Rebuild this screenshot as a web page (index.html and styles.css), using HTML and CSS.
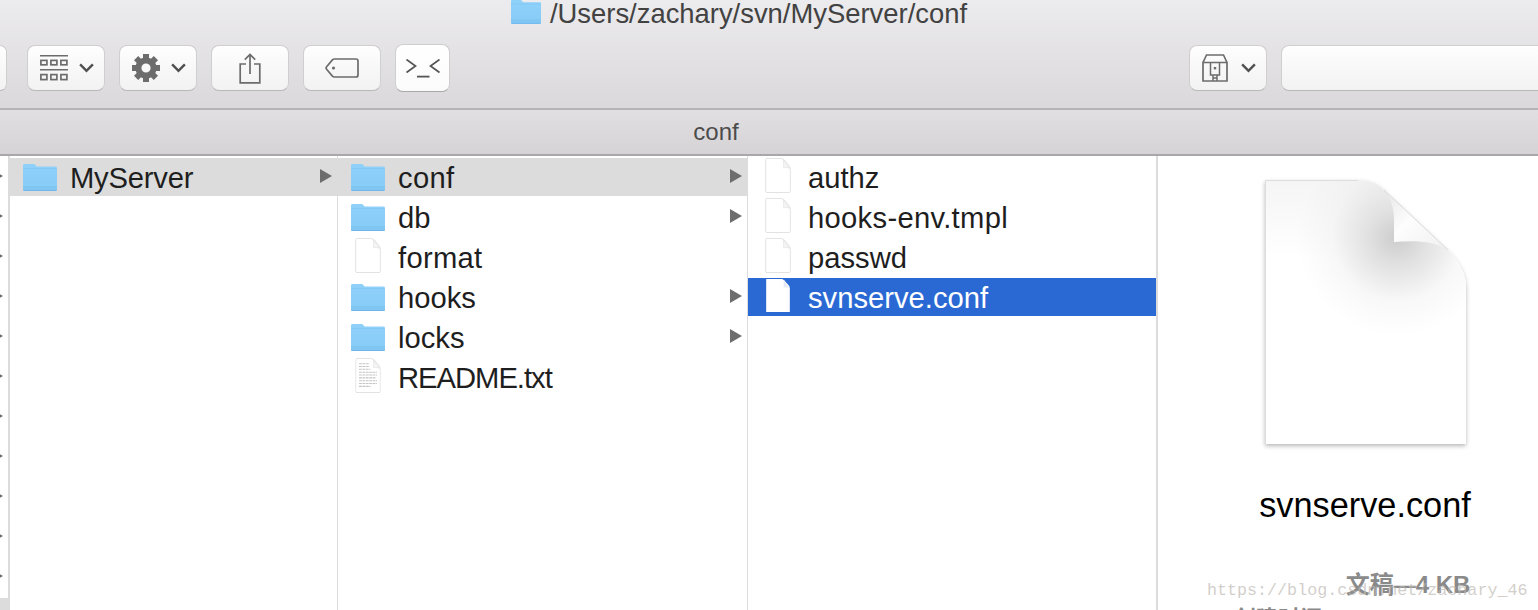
FILE: index.html
```html
<!DOCTYPE html>
<html lang="en">
<head>
<meta charset="utf-8">
<title>conf</title>
<link rel="stylesheet" href="styles.css">
</head>
<body>
<svg class="defs" width="0" height="0" aria-hidden="true">
  <defs>
    <linearGradient id="fg" x1="0" y1="0" x2="0" y2="1">
      <stop offset="0" stop-color="#8fd1f9"/><stop offset=".8" stop-color="#88ccf8"/><stop offset=".82" stop-color="#81c5f3"/><stop offset="1" stop-color="#81c5f3"/>
    </linearGradient>
    <radialGradient id="curl" gradientUnits="userSpaceOnUse" cx="132" cy="56" r="100">
      <stop offset="0" stop-color="#c9c9c9"/><stop offset=".28" stop-color="#e0e0e0"/><stop offset=".65" stop-color="#f8f8f8"/><stop offset="1" stop-color="#ffffff"/>
    </radialGradient>
    <linearGradient id="topshade" x1="0" y1="0" x2="0" y2="1">
      <stop offset="0" stop-color="#e6e6e6"/><stop offset="1" stop-color="#e6e6e6" stop-opacity="0"/>
    </linearGradient>
    <linearGradient id="flap" x1="0" y1="0" x2="1" y2="1">
      <stop offset="0" stop-color="#e6e6e6"/><stop offset=".45" stop-color="#fdfdfd"/><stop offset="1" stop-color="#f0f0f0"/>
    </linearGradient>
    <symbol id="folder" viewBox="0 0 34 27">
      <path d="M1.5 0H10.5C12 0 12.5 1 13.5 2.5H32.5C33.4 2.5 34 3.1 34 4V25.5C34 26.4 33.4 27 32.5 27H1.5C.6 27 0 26.4 0 25.5V1.5C0 .6.6 0 1.5 0Z" fill="url(#fg)"/>
      <path d="M0 4.5H34" stroke="#74bdef" stroke-width="1" opacity=".4"/>
      <path d="M.5 26.5H33.5" stroke="#70b8ec" stroke-width="1"/>
    </symbol>
    <symbol id="doc" viewBox="0 0 27 37">
      <path d="M.5 1.5C.5 1 1 .5 1.5 .5H16.5C18 .5 19 1 20 2L25 8C26 9.2 26.5 10.5 26.5 12V35.5C26.5 36 26 36.5 25.5 36.5H1.5C1 36.5 .5 36 .5 35.5Z" fill="#fff" stroke="#e0e0e0"/>
      <path d="M19 1.5C19.6 4 19.8 7 19.4 10C22 9.6 24 10 26 11Z" fill="#f6f6f6" stroke="#e2e2e2" stroke-width=".8"/>
    </symbol>
    <symbol id="docsel" viewBox="0 0 27 37">
      <path d="M1 1.5C1 1 1.5 1 2 1H16.5C18 1 19 1.5 20 2.5L25 8C25.6 9 26 10 26 12V35.5C26 36 25.5 36 25 36H2C1.5 36 1 36 1 35.5Z" fill="#fff"/>
      <path d="M19 2C19.6 4 19.8 7 19.4 10C22 9.6 24 10 25.8 11Z" fill="#e3e9f6"/>
    </symbol>
    <symbol id="arrow" viewBox="0 0 12 14">
      <path d="M0 0L12 7L0 14Z" fill="#6d6d6d"/>
    </symbol>
    <symbol id="chev" viewBox="0 0 16 10">
      <path d="M1.2 1.2L8 8L14.8 1.2" fill="none" stroke="#4f4f4f" stroke-width="2.6"/>
    </symbol>
  </defs>
</svg>

<div class="window">
  <header class="toolbar">
    <div class="title">
      <svg class="title-folder"><use href="#folder"/></svg>
      <span>/Users/zachary/svn/MyServer/conf</span>
    </div>
    <div class="tools">
      <div class="btn btn-stub"></div>
      <div class="btn btn-view">
        <svg class="ico-view" viewBox="0 0 28 26">
          <path d="M0 .8H28M0 14.8H28" stroke="#6c6c6c" stroke-width="1.6"/>
          <g fill="none" stroke="#6c6c6c" stroke-width="1.7">
            <rect x=".9" y="5.4" width="6" height="4.4"/><rect x="10.9" y="5.4" width="6" height="4.4"/><rect x="20.9" y="5.4" width="6" height="4.4"/>
            <rect x=".9" y="19.6" width="6" height="5"/><rect x="10.9" y="19.6" width="6" height="5"/><rect x="20.9" y="19.6" width="6" height="5"/>
          </g>
        </svg>
        <svg class="chev"><use href="#chev"/></svg>
      </div>
      <div class="btn btn-view">
        <svg class="ico-gear" viewBox="-14 -14 28 28">
          <circle r="7.6" fill="none" stroke="#6c6c6c" stroke-width="6"/>
          <g fill="#6c6c6c">
            <rect x="-3" y="-14" width="6" height="6"/>
            <rect x="-3" y="-14" width="6" height="6" transform="rotate(45)"/>
            <rect x="-3" y="-14" width="6" height="6" transform="rotate(90)"/>
            <rect x="-3" y="-14" width="6" height="6" transform="rotate(135)"/>
            <rect x="-3" y="-14" width="6" height="6" transform="rotate(180)"/>
            <rect x="-3" y="-14" width="6" height="6" transform="rotate(225)"/>
            <rect x="-3" y="-14" width="6" height="6" transform="rotate(270)"/>
            <rect x="-3" y="-14" width="6" height="6" transform="rotate(315)"/>
          </g>
        </svg>
        <svg class="chev"><use href="#chev"/></svg>
      </div>
      <div class="btn">
        <svg class="ico-share" viewBox="0 0 22 31">
          <path d="M7 11H1.2V29.8H20.8V11H15" fill="none" stroke="#6c6c6c" stroke-width="1.7"/>
          <path d="M11 21V1.5M5.8 6.6L11 1.4L16.2 6.6" fill="none" stroke="#6c6c6c" stroke-width="1.7"/>
        </svg>
      </div>
      <div class="btn">
        <svg class="ico-tag" viewBox="0 0 34 20">
          <path d="M9.5 1H31C32.2 1 33 1.8 33 3V17C33 18.2 32.2 19 31 19H9.5C8.6 19 8 18.7 7.4 18.1L1.6 11.2C1 10.5 1 9.5 1.6 8.8L7.4 1.9C8 1.3 8.6 1 9.5 1Z" fill="none" stroke="#6c6c6c" stroke-width="1.7"/>
          <circle cx="8.5" cy="10" r="1.6" fill="#6c6c6c"/>
        </svg>
      </div>
      <div class="btn btn-term">
        <svg class="ico-term" viewBox="0 0 34 19">
          <path d="M.5 .5L9.5 7L.5 13.5M33.5 .5L24.5 7L33.5 13.5" fill="none" stroke="#555" stroke-width="1.7"/>
          <path d="M11 17.6H23.5" stroke="#555" stroke-width="1.8"/>
        </svg>
      </div>
      <div class="tools-gap"></div>
      <div class="btn btn-view">
        <svg class="ico-box" viewBox="0 0 26 28">
          <path d="M1 8.5H25V27H1ZM1 8.5L4.5 1H21.5L25 8.5" fill="none" stroke="#6c6c6c" stroke-width="1.7"/>
          <path d="M8.5 9V21H17.5V9M11 21V27M15 21V27M11 24H15" fill="none" stroke="#6c6c6c" stroke-width="1.5"/>
          <rect x="11.8" y="13" width="2.4" height="2.4" fill="#6c6c6c"/>
        </svg>
        <svg class="chev"><use href="#chev"/></svg>
      </div>
      <div class="btn btn-search"></div>
    </div>
  </header>

  <div class="tabbar">conf</div>

  <main class="columns">
    <section class="col col-stub">
      <div class="row"><svg class="arrow"><use href="#arrow"/></svg></div>
      <div class="row"><svg class="arrow"><use href="#arrow"/></svg></div>
      <div class="row"><svg class="arrow"><use href="#arrow"/></svg></div>
      <div class="row"><svg class="arrow"><use href="#arrow"/></svg></div>
      <div class="row"><svg class="arrow"><use href="#arrow"/></svg></div>
      <div class="row"><svg class="arrow"><use href="#arrow"/></svg></div>
      <div class="row"><svg class="arrow"><use href="#arrow"/></svg></div>
      <div class="row"><svg class="arrow"><use href="#arrow"/></svg></div>
      <div class="row"><svg class="arrow"><use href="#arrow"/></svg></div>
      <div class="row"><svg class="arrow"><use href="#arrow"/></svg></div>
      <div class="row"><svg class="arrow"><use href="#arrow"/></svg></div>
      <div class="row is-open"></div>
    </section>

    <section class="col col-1">
      <div class="row is-open">
        <span class="slot"><svg class="folder"><use href="#folder"/></svg></span>
        <span class="name name-tight">MyServer</span>
        <svg class="arrow"><use href="#arrow"/></svg>
      </div>
    </section>

    <section class="col col-2">
      <div class="row is-open">
        <span class="slot"><svg class="folder"><use href="#folder"/></svg></span>
        <span class="name name-wide">conf</span>
        <svg class="arrow"><use href="#arrow"/></svg>
      </div>
      <div class="row">
        <span class="slot"><svg class="folder"><use href="#folder"/></svg></span>
        <span class="name">db</span>
        <svg class="arrow"><use href="#arrow"/></svg>
      </div>
      <div class="row">
        <span class="slot slot-doc"><svg class="doc"><use href="#doc"/></svg></span>
        <span class="name name-wide">format</span>
      </div>
      <div class="row">
        <span class="slot"><svg class="folder"><use href="#folder"/></svg></span>
        <span class="name">hooks</span>
        <svg class="arrow"><use href="#arrow"/></svg>
      </div>
      <div class="row">
        <span class="slot"><svg class="folder"><use href="#folder"/></svg></span>
        <span class="name">locks</span>
        <svg class="arrow"><use href="#arrow"/></svg>
      </div>
      <div class="row">
        <span class="slot slot-doc">
          <svg class="doc" viewBox="0 0 27 37">
            <use href="#doc" width="27" height="37"/>
            <path d="M4 6H15M4 9H15M4 12H16M4 15H23M4 18H23M4 21H22M4 24H23M4 27H23M4 30H16" stroke="#c4c4c4" stroke-width="1.1" stroke-dasharray="3 .6"/>
          </svg>
        </span>
        <span class="name name-readme">README.txt</span>
      </div>
    </section>

    <section class="col col-3">
      <div class="row">
        <span class="slot slot-doc"><svg class="doc"><use href="#doc"/></svg></span>
        <span class="name">authz</span>
      </div>
      <div class="row">
        <span class="slot slot-doc"><svg class="doc"><use href="#doc"/></svg></span>
        <span class="name name-wide">hooks-env.tmpl</span>
      </div>
      <div class="row">
        <span class="slot slot-doc"><svg class="doc"><use href="#doc"/></svg></span>
        <span class="name">passwd</span>
      </div>
      <div class="row is-selected">
        <span class="slot slot-doc"><svg class="doc"><use href="#docsel"/></svg></span>
        <span class="name">svnserve.conf</span>
      </div>
    </section>

    <aside class="preview">
      <svg class="big-doc" viewBox="-8 -4 217 280">
        <defs>
          <filter id="soft" x="-10%" y="-10%" width="120%" height="120%">
            <feDropShadow dx="0" dy="2" stdDeviation="2.2" flood-color="#000" flood-opacity=".28"/>
          </filter>
        </defs>
        <path d="M0 0H93C104 0 113 3 119 10L183 70C195 82 201 95 201 108V264H0Z" fill="#fff" filter="url(#soft)"/>
        <path d="M0 0H93C104 0 113 3 119 10L183 70C195 82 201 95 201 108V264H0Z" fill="url(#curl)"/>
        <path d="M0 0H93C104 0 113 3 119 10L183 70C186 73 189 76 191 79H0Z" fill="url(#topshade)" opacity=".4"/>
        <path d="M.5 264V.5H93" fill="none" stroke="#dedede"/>
        <path d="M119 10C126 18 129 28 129 40V62C150 60 170 61 183 70Z" fill="url(#flap)"/>
        <path d="M119 10L183 70" fill="none" stroke="#dcdcdc" stroke-width="1"/>
      </svg>
      <div class="big-name">svnserve.conf</div>
      <div class="kind">文稿<span class="dash">—</span>4 KB</div>
      <div class="created">创建时间</div>
      <div class="watermark">https://blog.csdn.net/zachary_46</div>
    </aside>
  </main>
</div>
</body>
</html>
```

FILE: styles.css
```css
html, body { margin: 0; padding: 0; background: #fff; }
body { font-family: "Liberation Sans", Arial, sans-serif; overflow: hidden; }
.defs { position: absolute; }
.window { width: 1538px; height: 610px; display: flex; flex-direction: column; overflow: hidden; }

.toolbar {
  height: 108px; flex: none;
  background: linear-gradient(#ecebed, #dad8db);
  border-bottom: 2px solid #b5b3b5;
}
.title {
  height: 44px; display: flex; align-items: flex-start; justify-content: center;
  gap: 9px; padding-right: 60px;
  color: #424242; font-size: 27.4px; line-height: 27px;
}
.title-folder { width: 30px; height: 24px; flex: none; }
.tools { display: flex; align-items: center; height: 48px; }
.btn {
  box-sizing: border-box; height: 46px; width: 78px; flex: none;
  margin-right: 14px; display: flex; align-items: center; justify-content: center;
  background: linear-gradient(#fefefe, #f2f2f2);
  border: 1px solid #d0cfd0; border-bottom-color: #b9b8b9; border-radius: 8px;
}
.btn-stub { width: 7px; border-left: 0; border-radius: 0 8px 8px 0; margin-right: 20px; }
.btn-view { justify-content: flex-start; padding-left: 12px; gap: 11px; }
.btn-term {
  width: 55px; height: 48px; margin-right: 0;
  background: linear-gradient(#ffffff, #fbfbfb);
  border-color: #cfcfcf; border-bottom-color: #a9a9a9;
}
.tools-gap { width: 739px; flex: none; }
.btn-search { width: 270px; margin-right: 0; border-radius: 8px 0 0 8px; border-right: 0; }
.ico-view { width: 28px; height: 26px; }
.ico-gear { width: 28px; height: 28px; }
.ico-share { width: 22px; height: 31px; }
.ico-tag { width: 34px; height: 20px; }
.ico-term { width: 34px; height: 19px; }
.ico-box { width: 26px; height: 28px; margin-right: 2px; }
.chev { width: 15px; height: 10px; }

.tabbar {
  height: 46px; flex: none; box-sizing: border-box;
  display: flex; align-items: center; justify-content: center;
  background: linear-gradient(#e1dfe1, #d5d3d5);
  border-bottom: 2px solid #a9a7a9;
  color: #4c4c4c; font-size: 24px; padding-right: 106px;
}

.columns { flex: 1; display: flex; min-height: 0; background: #fff; }
.col { box-sizing: border-box; flex: none; overflow: hidden; border-right: 1px solid #dcdcdc; }
.col-stub { width: 10px; border-right-width: 2px; }
.col-1 { width: 328px; }
.col-2 { width: 410px; }
.col-3 { width: 410px; border-right-width: 2px; }

.row {
  height: 38px; margin-top: 2px; display: flex; align-items: center;
  color: #1e1e1e; font-size: 29.2px;
}
.col-stub .row { justify-content: flex-end; width: 3px; }
.col-stub .row.is-open { width: auto; }
.is-open { background: #dcdcdc; }
.is-selected { background: #2a69d4; color: #fff; }
.slot { width: 60px; flex: none; display: flex; align-items: center; padding-left: 13px; box-sizing: border-box; }
.slot-doc { padding-left: 17px; align-self: flex-start; }
.name { flex: 1; white-space: nowrap; padding-top: 2px; }
.name-tight { letter-spacing: -.2px; }
.name-readme { letter-spacing: -1px; }
.name-wide { letter-spacing: .3px; }
.folder { width: 34px; height: 27px; display: block; }
.doc { width: 26px; height: 35px; display: block; }
.arrow { width: 12px; height: 14px; flex: none; margin-right: 5px; margin-bottom: 2px; }
.col-stub .arrow { margin-right: 0; }

.preview {
  flex: 1; min-width: 0; position: relative; overflow: hidden; box-sizing: border-box;
  display: flex; flex-direction: column; align-items: center; padding-left: 34px;
}
.big-doc { width: 217px; height: 280px; flex: none; margin-top: 20px; display: block; }
.big-name { font-size: 34.3px; line-height: 38px; color: #000; margin-top: 30px; }
.kind {
  font-size: 24px; font-weight: 700; line-height: 30px; color: #8a8a8a; margin-top: 46px;
  margin-left: 86px; white-space: nowrap;
  font-family: "Liberation Sans", "Noto Sans CJK SC", sans-serif;
}
.dash { font-size: 22px; }
.created {
  font-size: 22px; font-weight: 700; line-height: 26px; color: #8a8a8a; margin-top: 5px;
  align-self: flex-start; margin-left: 42px;
  font-family: "Liberation Sans", "Noto Sans CJK SC", sans-serif;
}
.watermark {
  position: absolute; left: 49px; top: 424px;
  font-family: "Liberation Mono", monospace; font-size: 16.7px; line-height: 22px;
  color: rgba(190, 185, 180, .7); white-space: nowrap;
}
```
